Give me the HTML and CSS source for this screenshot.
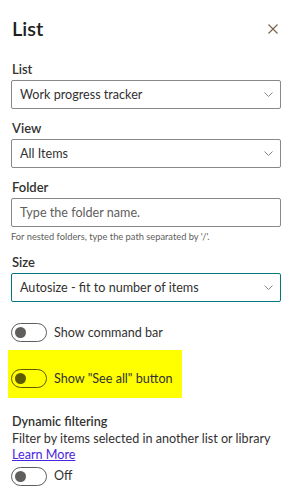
FILE: index.html
```html
<!DOCTYPE html>
<html lang="en">
<head>
    <meta charset="UTF-8">
    <title>List</title>
    <link rel="stylesheet" href="styles.css">
</head>
<body>
    <div class="panel">
        <div class="panel-head">
            <h1>List</h1>
            <button class="close" aria-label="Close">
                <svg width="10" height="10" viewBox="0 0 10 10"><path d="M0.5 0.5 L9.5 9.5 M9.5 0.5 L0.5 9.5" stroke="#7a6048" stroke-width="1.1" fill="none"/></svg>
            </button>
        </div>

        <div class="field">
            <label>List</label>
            <div class="dropdown">
                <span>Work progress tracker</span>
                <svg class="chev" width="9" height="5" viewBox="0 0 9 5"><path d="M0.5 0.5 L4.5 4.5 L8.5 0.5" stroke="#8a8886" fill="none"/></svg>
            </div>
        </div>

        <div class="field">
            <label>View</label>
            <div class="dropdown">
                <span>All Items</span>
                <svg class="chev" width="9" height="5" viewBox="0 0 9 5"><path d="M0.5 0.5 L4.5 4.5 L8.5 0.5" stroke="#8a8886" fill="none"/></svg>
            </div>
        </div>

        <div class="field">
            <label>Folder</label>
            <div class="textbox">
                <span class="placeholder">Type the folder name.</span>
            </div>
            <p class="hint">For nested folders, type the path separated by '/'.</p>
        </div>

        <div class="field">
            <label>Size</label>
            <div class="dropdown focused">
                <span>Autosize - fit to number of items</span>
                <svg class="chev" width="9" height="5" viewBox="0 0 9 5"><path d="M0.5 0.5 L4.5 4.5 L8.5 0.5" stroke="#8a8886" fill="none"/></svg>
            </div>
        </div>

        <div class="toggle-row first">
            <span class="toggle"><span class="thumb"></span></span>
            <span>Show command bar</span>
        </div>

        <div class="highlight">
            <div class="toggle-row">
                <span class="toggle"><span class="thumb"></span></span>
                <span>Show "See all" button</span>
            </div>
        </div>

        <div class="dynamic">
            <div class="dyn-title">Dynamic filtering</div>
            <div>Filter by items selected in another list or library</div>
            <a href="#" class="learn">Learn More</a>
            <div class="toggle-row off">
                <span class="toggle"><span class="thumb"></span></span>
                <span>Off</span>
            </div>
        </div>
    </div>
</body>
</html>
```

FILE: styles.css
```css
* {
    margin: 0;
    padding: 0;
    box-sizing: border-box;
}
body {
    background: #fff;
    font-family: Lato, "Open Sans", sans-serif;
    font-size: 12.6px;
    color: #323130;
}

.panel {
    padding: 14px 13px 0 11px;
}
.panel-head {
    display: flex;
    justify-content: space-between;
    align-items: center;
    height: 28px;
    padding-left: 1px;
}
.panel-head h1 {
    font-size: 20px;
    line-height: 28px;
    font-weight: 600;
    color: #201f1e;
}
.close {
    border: none;
    background: none;
    width: 10px;
    height: 10px;
    margin-right: 3px;
    margin-top: 2px;
    display: flex;
}

/* Form fields */
.field {
    margin-top: 9px;
}
.panel-head + .field {
    margin-top: 17px;
}
.field label {
    display: block;
    font-weight: 600;
    font-size: 13px;
    line-height: 20px;
    padding-left: 1px;
    margin-bottom: 1px;
    color: #323130;
}
.dropdown,
.textbox {
    height: 29px;
    border: 1px solid #8a8886;
    border-radius: 2px;
    display: flex;
    align-items: center;
    justify-content: space-between;
    padding: 0 7px 0 8px;
}
.dropdown.focused {
    border-color: #03787c;
}
.chev {
    display: block;
}
.placeholder {
    color: #605e5c;
}
.hint {
    font-size: 9.3px;
    line-height: 13px;
    color: #605e5c;
    margin-top: 3px;
}

/* Toggles */
.toggle-row {
    display: flex;
    align-items: center;
    gap: 7px;
    height: 19px;
}
.toggle-row.first {
    margin-top: 21px;
}
.toggle {
    width: 36px;
    height: 19px;
    border: 1px solid #605e5c;
    border-radius: 10px;
    display: flex;
    align-items: center;
    padding-left: 3px;
}
.thumb {
    width: 11px;
    height: 11px;
    border-radius: 50%;
    background: #605e5c;
}
.highlight {
    background: #ffff00;
    width: 174px;
    height: 48px;
    margin: 8px 0 0 -3px;
    padding: 19px 0 0 3px;
}
.highlight .toggle {
    border-color: #5e5a00;
}
.highlight .thumb {
    background: #5e5a00;
}

/* Dynamic filtering */
.dynamic {
    margin-top: 16px;
    line-height: 16.5px;
    padding-left: 1px;
}
.dyn-title {
    font-weight: 600;
}
.learn {
    color: #4b24e0;
    text-decoration: underline;
}
.toggle-row.off {
    margin-top: 3px;
    margin-left: -1px;
}
```
